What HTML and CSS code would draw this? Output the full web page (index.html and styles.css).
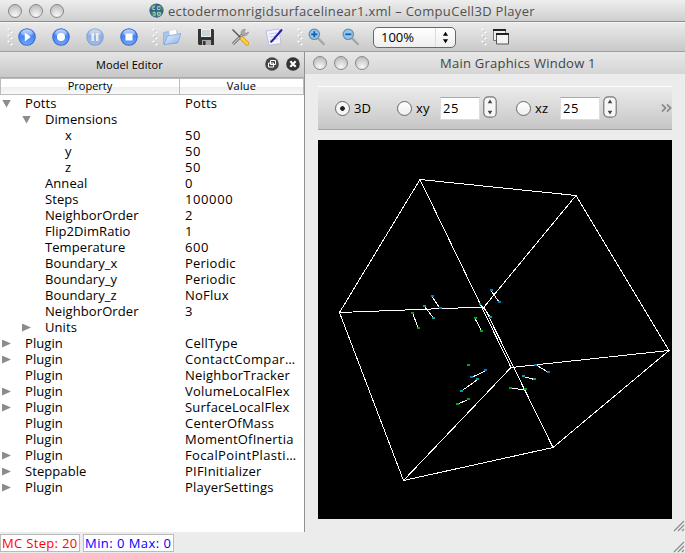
FILE: index.html
```html
<!DOCTYPE html>
<html lang="en">
<head>
<meta charset="utf-8">
<title>CompuCell3D Player</title>
<link rel="stylesheet" href="styles.css">
</head>
<body>
<svg class="defs" aria-hidden="true">
  <defs>
    <linearGradient id="blue" x1="0" y1="0" x2="0" y2="1"><stop offset="0" stop-color="#a9c9fb"/><stop offset=".45" stop-color="#4383f2"/><stop offset="1" stop-color="#72a8fa"/></linearGradient>
    <linearGradient id="paper" x1="0" y1="0" x2="1" y2="1"><stop offset="0" stop-color="#e8f2fe"/><stop offset="1" stop-color="#86b2ea"/></linearGradient>
    <pattern id="dots" width="6" height="6" patternUnits="userSpaceOnUse"><circle cx="1.6" cy="1.6" r="1.2" fill="#f7f7f7"/><path d="M2 3h1v-1" stroke="#aaa" fill="none" stroke-width=".7"/><circle cx="4.6" cy="4.6" r="1.2" fill="#f7f7f7"/><path d="M5 6h1v-1" stroke="#aaa" fill="none" stroke-width=".7"/></pattern>
    <symbol id="grip" viewBox="0 0 6 18"><rect width="6" height="18" fill="url(#dots)"/></symbol>
    <symbol id="disc" viewBox="0 0 18 18"><circle cx="9" cy="9" r="8.2" fill="url(#blue)" stroke="#3569cf" stroke-width="1.1"/><ellipse cx="9" cy="4.8" rx="5.8" ry="3.3" fill="#fff" opacity=".3"/></symbol>
    <symbol id="lens" viewBox="0 0 18 18"><path d="M10.5 10.5l6 6" stroke="#8d9398" stroke-width="2.2"/><path d="M11 10.5l5.5 5.5" stroke="#d5d8da" stroke-width=".8"/><circle cx="6.3" cy="6.3" r="5.2" fill="#8cc8f2" stroke="#75899b" stroke-width="1.2"/></symbol>
  </defs>
</svg>
<div class="app">
  <header class="titlebar">
    <div class="lights"><i></i><i></i><i></i></div>
    <svg class="globe" viewBox="0 0 16 16"><circle cx="8" cy="8" r="7.6" fill="#33618c"/><path d="M1 5l4-4 3 1-2 3-4 2zM9 2l4 1 2 4-4-1zM2 10l4-1 2 3-1 3-3-2zM9 9l5 1-2 4-3 1z" fill="#4f9365"/><path d="M6.5 4H4v3h2.500M12 4H9v3h3M4 10h2.500v3H4M9 10h3v3H9z" stroke="#a9d6bf" fill="none"/></svg>
    <span class="app-title">ectodermonrigidsurfacelinear1.xml – CompuCell3D Player</span>
  </header>
  <nav class="toolbar">
    <svg class="grip"><use href="#grip"/></svg>
    <div class="group">
      <svg viewBox="0 0 18 18"><use href="#disc"/><path d="M6.800 4.500v9l6-4.500z" fill="#fff"/></svg>
      <svg viewBox="0 0 18 18"><use href="#disc"/><circle cx="9" cy="9" r="4" fill="#fff"/></svg>
      <svg class="off" viewBox="0 0 18 18"><use href="#disc"/><path d="M5.500 5h2.500v8H5.500zM10 5h2.500v8H10z" fill="#fff"/></svg>
      <svg viewBox="0 0 18 18"><use href="#disc"/><path d="M5.500 5.500h7v7h-7z" fill="#fff"/></svg>
    </div>
    <svg class="grip"><use href="#grip"/></svg>
    <div class="group">
      <svg viewBox="0 0 18 18"><path d="M.6 16V4.500l5-.9 1.400 1.500 7-2v12z" fill="#aac8ee" stroke="#8ba9d3" stroke-width=".7"/><path d="M6 3l7-2 2 10-7 2z" fill="#fff" stroke="#c4cede" stroke-width=".6"/><path d="M1 16.700L4.500 8l13.500-2.500-3 9z" fill="url(#paper)" stroke="#7d9fd0" stroke-width=".7"/></svg>
      <svg viewBox="0 0 18 18"><path d="M1 1h15l1 1v15H2l-1-1z" fill="#343434"/><path d="M4 1h10v8H4z" fill="#e7eff3"/><path d="M5 3h8M5 5h8M5 7h8" stroke="#adb8be"/><path d="M5 12h9v5H5z" fill="#aaa"/><path d="M6 13h2.500v4H6z" fill="#333"/></svg>
      <svg viewBox="0 0 18 18"><path d="M2 16L12 6" stroke="#626262" stroke-width="3"/><path d="M2 16L12 6" stroke="#c9c9c9" stroke-width="1.300"/><path d="M12 1.500c-3 2-2 5 0 6s5-.5 5.500-3.500L15 5.500 13 4l1.500-2.500z" fill="#aaa" stroke="#777" stroke-width=".5"/><path d="M1.500 1.500l8 8" stroke="#555" stroke-width="1.500"/><path d="M11 10.500l5 5" stroke="#d19617" stroke-width="4.200" stroke-linecap="round"/><path d="M11 10.500l5 5" stroke="#ffd03b" stroke-width="2.800" stroke-linecap="round"/></svg>
      <svg viewBox="0 0 18 18"><path d="M1 3l13-2 2 14.500-12 1.800z" fill="#f4f4ff" stroke="#b1b2e4" stroke-width=".8"/><path d="M4 6l8-1.200M4.500 9l8-1.200M5 12l8-1.200" stroke="#b8baf0" stroke-width=".8"/><path d="M17 1.500L7.500 12.500l-2 1.800" stroke="#262298" stroke-width="2" fill="none"/></svg>
    </div>
    <svg class="grip"><use href="#grip"/></svg>
    <div class="group">
      <svg viewBox="0 0 18 18"><use href="#lens"/><path d="M3.300 6.300h6M6.300 3.300v6" stroke="#145ba8" stroke-width="1.700"/></svg>
      <svg viewBox="0 0 18 18"><use href="#lens"/><path d="M3.300 6.300h6" stroke="#145ba8" stroke-width="1.700"/></svg>
    </div>
    <div class="combo"><span>100%</span><svg viewBox="0 0 18 20"><path d="M9 4l2.700 4.200H6.300zM9 16l2.700-4.200H6.300z"/></svg></div>
    <svg class="grip last"><use href="#grip"/></svg>
    <svg class="windows" viewBox="0 0 18 18"><path d="M1.500 1.500h12v11h-12z" fill="#eee" stroke="#777"/><path d="M1 2h13" stroke="#222" stroke-width="2"/><path d="M4.500 5.500h12v10.500h-12z" fill="#f4f4f4" stroke="#555"/><path d="M4 6h13" stroke="#222" stroke-width="2"/></svg>
  </nav>
  <main class="work">
    <section class="dock">
      <div class="dock-title"><span>Model Editor</span>
        <svg viewBox="0 0 14 14"><circle cx="7" cy="7" r="6.800" fill="#464646"/><path d="M5.500 3.500h5v4h-5zM3.500 6h5v4h-5z" fill="#464646" stroke="#fff"/></svg>
        <svg viewBox="0 0 14 14"><circle cx="7" cy="7" r="6.800" fill="#333"/><path d="M4.300 4.300l5.400 5.400M9.700 4.300L4.300 9.700" stroke="#fff" stroke-width="2.200"/></svg>
      </div>
      <div class="columns"><span>Property</span><span>Value</span></div>
      <div class="tree">
        <div class="row open"><b>Potts</b><span>Potts</span></div>
        <div class="row l1 open"><b>Dimensions</b><span></span></div>
        <div class="row l2"><b>x</b><span class="num">50</span></div>
        <div class="row l2"><b>y</b><span class="num">50</span></div>
        <div class="row l2"><b>z</b><span class="num">50</span></div>
        <div class="row l1"><b>Anneal</b><span class="num">0</span></div>
        <div class="row l1"><b>Steps</b><span class="num">100000</span></div>
        <div class="row l1"><b>NeighborOrder</b><span class="num">2</span></div>
        <div class="row l1"><b>Flip2DimRatio</b><span class="num">1</span></div>
        <div class="row l1"><b>Temperature</b><span class="num">600</span></div>
        <div class="row l1"><b>Boundary_x</b><span>Periodic</span></div>
        <div class="row l1"><b>Boundary_y</b><span>Periodic</span></div>
        <div class="row l1"><b>Boundary_z</b><span>NoFlux</span></div>
        <div class="row l1"><b>NeighborOrder</b><span class="num">3</span></div>
        <div class="row l1 shut"><b>Units</b><span></span></div>
        <div class="row shut"><b>Plugin</b><span>CellType</span></div>
        <div class="row shut"><b>Plugin</b><span class="wide">ContactCompar…</span></div>
        <div class="row"><b>Plugin</b><span>NeighborTracker</span></div>
        <div class="row shut"><b>Plugin</b><span>VolumeLocalFlex</span></div>
        <div class="row shut"><b>Plugin</b><span>SurfaceLocalFlex</span></div>
        <div class="row"><b>Plugin</b><span>CenterOfMass</span></div>
        <div class="row"><b>Plugin</b><span>MomentOfInertia</span></div>
        <div class="row shut"><b>Plugin</b><span class="wide">FocalPointPlasti…</span></div>
        <div class="row shut"><b>Steppable</b><span>PIFInitializer</span></div>
        <div class="row shut"><b>Plugin</b><span>PlayerSettings</span></div>
      </div>
    </section>
    <section class="graphics">
      <div class="sub-title"><div class="lights"><i></i><i></i><i></i></div><span>Main Graphics Window 1</span></div>
      <div class="view-bar">
        <i class="radio on"></i><label class="l3d">3D</label>
        <i class="radio"></i><label class="lxy">xy</label>
        <span class="field">25</span><svg class="spin" viewBox="0 0 14 22"><rect x=".8" y=".8" width="12.400" height="20.400" rx="4.500" fill="#f7f7f7" stroke="#777" stroke-width="1.200"/><path d="M7 3.500l2.300 3.700H4.700zM7 18.500l2.300-3.700H4.700z" fill="#444"/></svg>
        <i class="radio second"></i><label class="lxz">xz</label>
        <span class="field">25</span><svg class="spin" viewBox="0 0 14 22"><rect x=".8" y=".8" width="12.400" height="20.400" rx="4.500" fill="#f7f7f7" stroke="#777" stroke-width="1.200"/><path d="M7 3.500l2.300 3.700H4.700zM7 18.500l2.300-3.700H4.700z" fill="#444"/></svg>
        <svg class="more" viewBox="0 0 11 8"><path d="M1 .5L4.500 4 1 7.500M6 .5L9.500 4 6 7.500" fill="none" stroke="#858585" stroke-width="1.700"/></svg>
      </div>
      <svg class="scene" viewBox="318 140 354 379">
        <g fill="none" stroke="#fff" shape-rendering="crispEdges">
          <path d="M420 179.500L576 195.500 669 350.500 553 447.500 403.500 480.500 339.500 312.500zM420 179.500L511 367.500M339.500 312.500L484 307 576 195.500M484 307L553 447.500M669 350.500L511 367.500 403.500 480.500"/>
          <path d="M432 296.500l8 12M424.500 306.500l9.500 12M412.700 313l5.500 15.500M491 290.500l8.300 12M480 304l10.700 13M475 318.500l6.500 12.300M471.500 377.500l14-6.800M461.500 391l16-11.300M457.700 404l11.200-4.700M535.500 364.700l13.200 7.800M523.500 376.700l11 2.800M510.700 388.500l15 1"/>
        </g>
        <g class="dot" shape-rendering="crispEdges">
          <path stroke="#087ac0" d="M431 296h3M439 308h3M490 290h3M498 302h3M470 377h3M484 370h3M534 365h3M547 372h3"/>
          <path stroke="#00a3a3" d="M423 306h3M432 318h3M489 317h3M479 304h2M460 391h3M476 379h3M522 376h3M533 379h3"/>
          <path stroke="#00a51e" d="M411 313h3M417 328h3M474 318h3M480 331h3M467 365h3M456 404h3M467 399h3M509 388h3M524 389h3"/>
        </g>
      </svg>
      <svg class="size-grip" viewBox="0 0 12 12"><path d="M1 11L11 1M5 11l6-6M9 11l2-2" stroke="#8b8b8b" stroke-width="1.200"/></svg>
    </section>
  </main>
  <footer class="status"><span class="step">MC Step: 20</span><span class="range">Min: 0 Max: 0</span>
    <svg class="size-grip" viewBox="0 0 12 12"><path d="M1 11L11 1M5 11l6-6M9 11l2-2" stroke="#8b8b8b" stroke-width="1.200"/></svg>
  </footer>
</div>
</body>
</html>
```
FILE: styles.css
```css
* { box-sizing: border-box; }
body { margin: 0; background: #ececec; color: #000; font: 13px/16px "Open Sans", "Noto Sans", sans-serif; overflow: hidden; }
svg { display: block; flex: none; }
.defs { position: absolute; width: 0; height: 0; }
.app { width: 685px; height: 553px; display: flex; flex-direction: column; }
.titlebar { height: 22px; display: flex; align-items: center; background: linear-gradient(#eee, #cfcfcf); border-bottom: 1px solid #8c8c8c; border-radius: 5px 5px 0 0; }
.lights { display: flex; gap: 7px; margin-left: 8px; }
.lights i { width: 14px; height: 14px; border: 1px solid #888; border-radius: 50%; background: radial-gradient(circle at 50% 85%, #f8f8f8, #c0c0c0 80%); }
.globe { width: 15px; height: 15px; margin-left: 85px; }
.app-title { margin-left: 4px; color: #505050; white-space: nowrap; letter-spacing: .31px; }
.toolbar { height: 30px; display: flex; align-items: center; background: linear-gradient(#eaeaea, #c9c9c9); border-top: 1px solid #f6f6f6; border-bottom: 1px solid #a0a0a0; }
.grip { width: 6px; height: 18px; margin-left: 7px; }
.group { display: flex; gap: 16px; margin-left: 5px; }
.group svg, .windows { width: 18px; height: 18px; }
.group + .grip { margin-left: 14px; }
.off { opacity: .5; }
.combo { width: 83px; height: 21px; margin-left: 13px; display: flex; align-items: center; justify-content: space-between; border: 1px solid #686868; border-radius: 5px; background: linear-gradient(#fff, #eee); padding-left: 7px; }
.combo svg { width: 20px; height: 19px; border-left: 1px solid #ddd; }
.grip.last { margin-left: 25px; }
.windows { margin-left: 5px; }
.work { height: 480px; display: flex; }
.dock { width: 305px; background: #fff; border-right: 1px solid #929292; }
.dock-title { height: 26px; display: flex; align-items: center; background: linear-gradient(#e6e6e6, #c7c7c7); border-bottom: 1px solid #aaa; font-size: 11px; letter-spacing: .1px; padding-left: 96px; }
.dock-title span { flex: none; width: 169px; }
.dock-title svg { width: 14px; height: 14px; margin: -2px 0 0 7px; }
.dock-title span + svg { margin-left: 0; }
.columns { height: 17px; display: flex; border: 1px solid #bcbcbc; background: linear-gradient(#fff 50%, #eee 51%, #f9f9f9); font-size: 11px; line-height: 14px; text-align: center; }
.columns span:first-child { width: 179px; border-right: 1px solid #bbb; }
.columns span:last-child { flex: 1; letter-spacing: .2px; }
.row { height: 16px; display: flex; align-items: center; }
.row::before { content: ""; width: 9px; height: 8px; margin: 1px 14px 0 2px; flex: none; }
.open::before { background: #8c8c8c; clip-path: polygon(0 0, 100% 0, 50% 100%); }
.shut::before { background: #8c8c8c; clip-path: polygon(0 0, 100% 50%, 0 100%); }
.row b { font-weight: 400; width: 160px; letter-spacing: .08px; }
.row span { letter-spacing: .22px; }
.row .wide { letter-spacing: .36px; }
.row .num { letter-spacing: .6px; }
.row.l1 { padding-left: 20px; }
.row.l1 b { width: 140px; }
.row.l2 { padding-left: 40px; }
.row.l2 b { width: 120px; }
.graphics { width: 380px; display: flex; flex-direction: column; }
.sub-title { height: 22px; display: flex; align-items: center; background: linear-gradient(#e8e8e8, #d5d5d5); color: #444; }
.sub-title span { margin-left: 71px; white-space: nowrap; letter-spacing: .24px; }
.view-bar { width: 354px; height: 44px; margin: 12px 0 10px 13px; display: flex; align-items: center; background: linear-gradient(#ebebeb, #c6c6c6); border-top: 1px solid #fff; border-bottom: 1px solid #a5a5a5; }
.radio { width: 15px; height: 15px; margin-left: 17px; border: 1px solid #686868; border-radius: 50%; background: linear-gradient(#fff, #eee); }
.radio.on { background: radial-gradient(circle, #222 0 2px, #f6f6f6 2.6px); }
.l3d { width: 40px; margin-left: 4px; }
.l3d + .radio { margin-left: 3px; }
.lxy, .lxz { width: 20px; margin-left: 4px; letter-spacing: .3px; }
.field { width: 40px; height: 23px; margin-left: 4px; background: #fff; border: 1px solid #ddd; border-top-color: #aaa; padding: 2px; letter-spacing: .6px; }
.spin { width: 14px; height: 22px; margin: -2px 0 0 3px; }
.radio.second { margin-left: 19px; }
.lxz { width: 21px; }
.more { width: 11px; height: 8px; margin-left: auto; }
.scene { width: 354px; height: 379px; margin-left: 13px; background: #000; }
.dot { stroke-width: 2px; }
.size-grip { width: 12px; height: 12px; margin-left: auto; }
.graphics .size-grip { margin-top: 1px; }
.status { height: 21px; display: flex; align-items: flex-start; padding-top: 2px; }
.status span { height: 18px; background: #fff; border: 1px solid #bbb; padding-left: 1px; white-space: nowrap; }
.status .step { width: 80px; color: #f00; letter-spacing: .33px; }
.status .range { width: 91px; margin-left: 3px; color: #00f; letter-spacing: .45px; }
.status .size-grip { margin-top: 7px; }
```
